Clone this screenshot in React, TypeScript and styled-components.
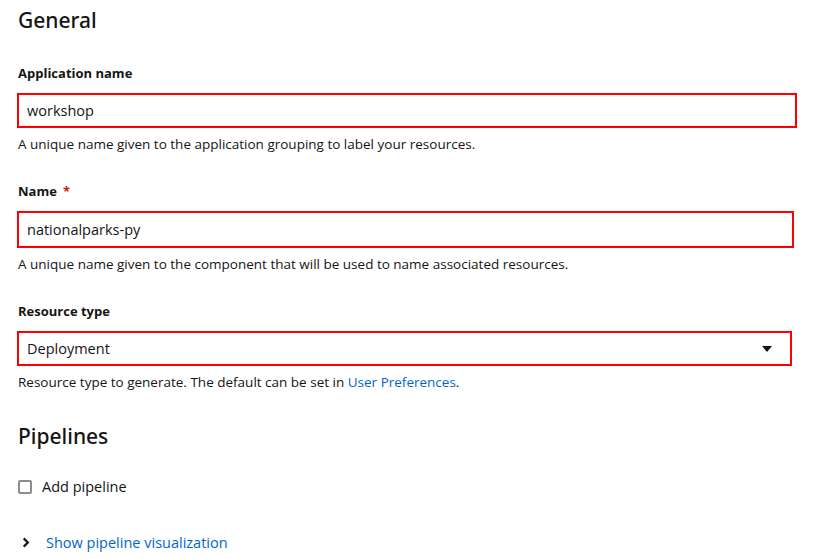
import React from "react";
import styled, { createGlobalStyle } from "styled-components";

const Global = createGlobalStyle`
  html, body { margin: 0; padding: 0; background: #fff; }
  body { font-family: "Open Sans", "Noto Sans", sans-serif; color: #151515; }
  * { box-sizing: border-box; }
`;

const Page = styled.div`
  display: flex;
  flex-direction: column;
  padding: 6px 0 0 17px;
  width: 821px;
`;

const Heading = styled.h2<{ $top?: number }>`
  margin: ${(p) => p.$top ?? 0}px 0 0 1px;
  font-family: "Noto Sans", sans-serif;
  font-size: 21px;
  font-weight: 500;
  line-height: 28px;
  color: #151515;
`;

const Group = styled.div<{ $top: number }>`
  display: flex;
  flex-direction: column;
  margin-top: ${(p) => p.$top}px;
`;

const Label = styled.label`
  font-size: 13px;
  font-weight: 700;
  line-height: 20px;
  margin-left: 1px;
  margin-top: -1px;
  display: flex;
  gap: 6px;
`;

const Req = styled.span`
  color: #c9190b;
`;

const Field = styled.div<{ $w: number; $h: number }>`
  margin-top: 10px;
  width: ${(p) => p.$w}px;
  height: ${(p) => p.$h}px;
  border: 2px solid #ff0000;
  display: flex;
  align-items: center;
  justify-content: space-between;
  padding: 0 18px 0 8px;
  font-size: 14.5px;
  color: #151515;
`;

const Helper = styled.div`
  margin-top: 6px;
  margin-left: 1px;
  font-size: 13.5px;
  line-height: 20px;
  color: #151515;
`;

const Link = styled.a`
  color: #0066cc;
  text-decoration: none;
`;

const Caret = styled.svg`
  width: 10px;
  height: 6px;
`;

const CheckRow = styled.label`
  display: flex;
  align-items: center;
  gap: 10px;
  margin-top: 27px;
  margin-left: 1px;
  font-size: 14.5px;
`;

const Box = styled.span`
  width: 14px;
  height: 14px;
  border: 2px solid #8a8d90;
  border-radius: 2px;
`;

const Toggle = styled.div`
  display: flex;
  align-items: center;
  gap: 16px;
  margin-top: 37px;
  margin-left: 5px;
  font-size: 14.5px;
  color: #0066cc;
`;

export default function App() {
  return (
    <>
      <Global />
      <Page>
        <Heading>General</Heading>
        <Group $top={30}>
          <Label>Application name</Label>
          <Field $w={780} $h={35}>workshop</Field>
          <Helper>A unique name given to the application grouping to label your resources.</Helper>
        </Group>
        <Group $top={28}>
          <Label>
            Name <Req>*</Req>
          </Label>
          <Field $w={777} $h={37}>nationalparks-py</Field>
          <Helper>A unique name given to the component that will be used to name associated resources.</Helper>
        </Group>
        <Group $top={28}>
          <Label>Resource type</Label>
          <Field $w={775} $h={35}>
            <span>Deployment</span>
            <Caret viewBox="0 0 10 6">
              <path d="M0 0h10L5 6z" fill="#151515" />
            </Caret>
          </Field>
          <Helper>
            Resource type to generate. The default can be set in <Link href="#">User Preferences</Link>.
          </Helper>
        </Group>
        <Heading $top={30}>Pipelines</Heading>
        <CheckRow>
          <Box />
          Add pipeline
        </CheckRow>
        <Toggle>
          <svg width="8" height="11" viewBox="0 0 8 12">
            <path d="M1.5 1.5L6 6l-4.5 4.5" stroke="#151515" strokeWidth="2.4" fill="none" />
          </svg>
          Show pipeline visualization
        </Toggle>
      </Page>
    </>
  );
}
